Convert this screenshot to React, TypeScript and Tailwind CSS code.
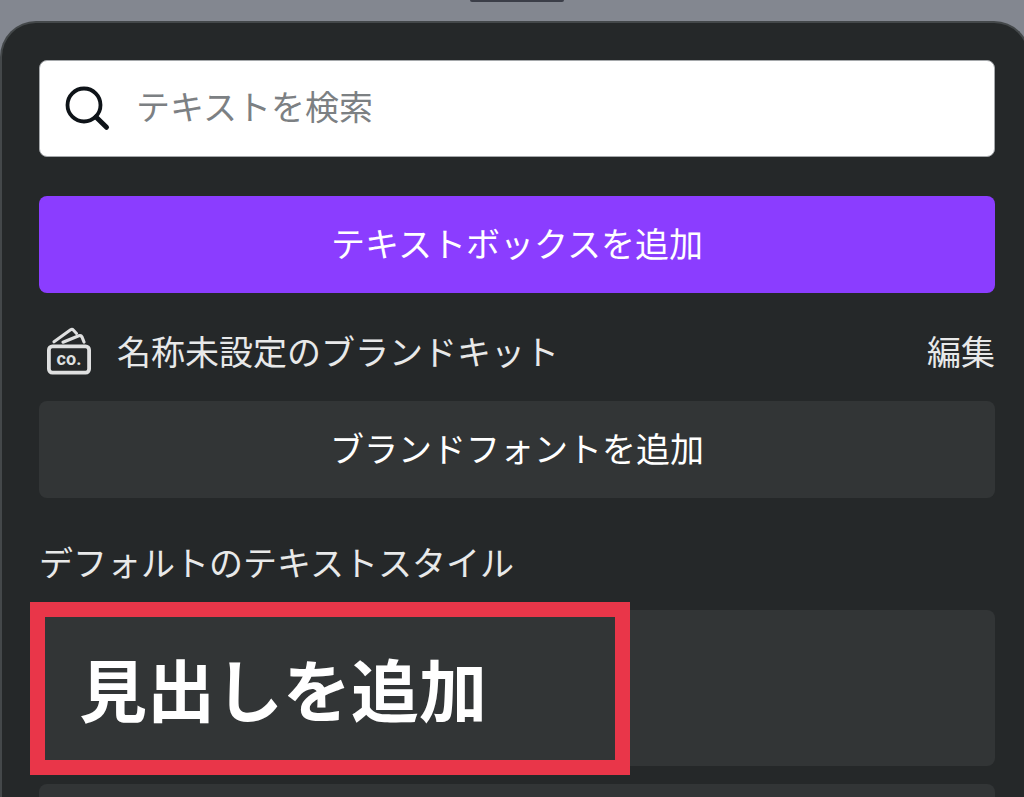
function SearchIcon() {
  return (
    <svg className="size-12 shrink-0" viewBox="0 0 48 48" fill="none" stroke="#0e1318" aria-hidden="true">
      <circle cx="20" cy="20" r="16.5" strokeWidth="3.8" />
      <path d="M32 32 42.500 42.300" strokeWidth="5" strokeLinecap="round" />
    </svg>
  )
}

function BrandKitIcon() {
  return (
    <svg className="h-12 w-11 shrink-0" viewBox="0 0 44 48" fill="none" stroke="#dfe0e0" strokeLinejoin="round" aria-hidden="true">
      <path d="M7 14.800 23.600 2.800q1.600-1 2.900.4L29.500 6.500" strokeWidth="3" strokeLinecap="round" />
      <path d="M16 15.200 31.800 8.800q2.200-.8 3.200 1.200L37 15" strokeWidth="3.200" strokeLinecap="round" />
      <rect x="1.900" y="19.400" width="40.200" height="26.200" rx="3.500" strokeWidth="3.800" />
      <text
        x="22"
        y="38"
        textAnchor="middle"
        fill="#dfe0e0"
        stroke="none"
        fontSize="18"
        fontWeight="700"
        fontFamily="Roboto, 'Liberation Sans', sans-serif"
      >
        co.
      </text>
    </svg>
  )
}

export default function App() {
  return (
    <div className="flex h-screen flex-col overflow-hidden bg-[#838790] font-['Noto_Sans_CJK_JP',sans-serif] text-[34px] leading-[48px] text-[#e8e9e9]">
      <div className="flex h-[21px] shrink-0 items-start justify-center">
        <div className="ml-2.5 h-0.5 w-[94px] rounded-b-sm bg-[#3b3e48]" />
      </div>

      <main className="-mr-1.5 flex-1 rounded-t-[36px] border-2 border-b-0 border-[#44484a] bg-[#252829] pr-[33px] pl-[37px] pt-[37px]">
        <label className="flex h-[97px] items-center gap-6 rounded-lg border border-[#a5a8ab] bg-white px-6">
          <SearchIcon />
          <input
            type="search"
            aria-label="テキストを検索"
            placeholder="テキストを検索"
            className="min-w-0 flex-1 bg-transparent pb-1.5 text-[#0e1318] outline-none placeholder:text-[#7c8083]"
          />
        </label>

        <button type="button" className="mt-[39px] flex h-[97px] w-full items-center justify-center rounded-lg bg-[#8b3dff] pb-1 text-white">
          テキストボックスを追加
        </button>

        <section>
          <div className="flex h-[108px] items-center justify-between pt-2 pl-2">
            <h2 className="flex items-center gap-[26px]">
              <BrandKitIcon />
              名称未設定のブランドキット
            </h2>
            <button type="button">編集</button>
          </div>
          <button type="button" className="flex h-[97px] w-full items-center justify-center rounded-lg bg-[#323536] pb-1 text-white">
            ブランドフォントを追加
          </button>
        </section>

        <section className="pt-10">
          <h2>デフォルトのテキストスタイル</h2>
          <div className="relative mt-6">
            <button type="button" className="flex h-[156px] w-full items-center rounded-lg bg-[#323536] px-10 text-[68px] leading-[96px] font-bold text-white">
              見出しを追加
            </button>
            {/* highlight around the heading button */}
            <div className="pointer-events-none absolute -top-2 -bottom-[9px] -left-[9px] w-[600px] border-[15px] border-[#e93649]" />
          </div>
          <div className="mt-[18px] h-[120px] rounded-lg bg-[#323536]" />
        </section>
      </main>
    </div>
  )
}
